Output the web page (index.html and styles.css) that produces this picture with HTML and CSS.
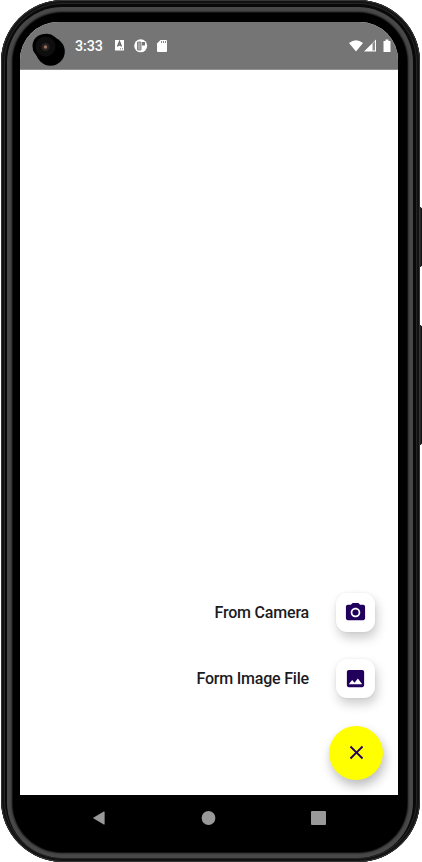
FILE: index.html
```html
<!DOCTYPE html>
<html lang="en">
<head>
<meta charset="utf-8">
<title>Phone</title>
<link rel="stylesheet" href="styles.css">
</head>
<body>
<div class="device">
  <i class="side-button power"></i>
  <i class="side-button volume"></i>
  <div class="frame"><div class="rim"><div class="bezel">
    <div class="screen">
      <header class="status">
        <svg class="lens" viewBox="0 0 34 36"><circle cx="18.500" cy="20.500" r="14.300"/><circle cx="12.500" cy="15" r="12"/><path d="M12 3Q18 1.500 23 6L31 14L6 27L1 19z"/><circle cx="13.500" cy="15.500" r="10" fill="#0e0e0e"/><circle cx="13.500" cy="16" r="4" fill="#2b2020"/><circle cx="13.500" cy="16" r="1.700" fill="#987565"/></svg>
        <span class="time">3:33</span>
        <svg class="notices" viewBox="0 0 54 14"><path fill="#fff" d="M0 1h9v10.500H0z"/><path d="M2.500 7.500l2-5 2 5M3 6h3" fill="none" stroke="#656565" stroke-width="1.300"/><path d="M5 9.800h3" stroke="#757575" stroke-dasharray="1"/><circle cx="25.700" cy="6.800" r="6.500" fill="#fff"/><path d="M22.500 3h3.500v8h-3.500z" fill="#a5a5a5" stroke="#858585"/><path d="M27 3h3v3.500h-3z" fill="#757575"/><path fill="#fff" d="M45.500 1H51q1 0 1 1v10q0 1-1 1h-8q-1 0-1-1V4.500z"/><path d="M46.500 2v2m2-2v2m2-2v2" stroke="#858585"/></svg>
        <svg class="signals" viewBox="0 0 43 14"><path fill="#fff" d="M0 4Q7-1.500 14 4L7 12.500zM27 .5V12.500H15z"/><path fill="#8d8d8d" d="M23.500 4.500L26 2v9.500h-2.500z"/><path fill="#fff" d="M36.500.5h3V2h2v11h-7V2h2z"/></svg>
      </header>
      <main>
        <div class="action"><span>From Camera</span><button><svg viewBox="0 0 24 24"><circle cx="12" cy="12" r="3.200"/><path d="M9 2 7.170 4H4c-1.100 0-2 .9-2 2v12c0 1.100.9 2 2 2h16c1.100 0 2-.9 2-2V6c0-1.100-.9-2-2-2h-3.170L15 2zm3 15c-2.760 0-5-2.240-5-5s2.240-5 5-5 5 2.240 5 5-2.240 5-5 5z"/></svg></button></div>
        <div class="action"><span>Form Image File</span><button><svg viewBox="0 0 24 24"><path d="M21 19V5c0-1.100-.9-2-2-2H5c-1.100 0-2 .9-2 2v14c0 1.100.9 2 2 2h14c1.100 0 2-.9 2-2zM8.500 13.500l2.500 3.010L14.500 12l4.500 6H5z"/></svg></button></div>
        <button class="fab"><svg viewBox="0 0 24 24"><path d="M19 6.410 17.590 5 12 10.590 6.410 5 5 6.410 10.590 12 5 17.590 6.410 19 12 13.410 17.590 19 19 17.590 13.410 12z"/></svg></button>
      </main>
    </div>
    <nav><svg viewBox="0 0 14 16"><path d="M.5 8 13 .5q1-.3 1 .7v13.600q0 1-1 .7z"/></svg><svg viewBox="0 0 14 14"><circle cx="7" cy="7" r="6.900"/></svg><svg viewBox="0 0 15 14"><rect width="15" height="14" rx="1"/></svg></nav>
  </div></div></div>
</div>
</body>
</html>
```
FILE: styles.css
```css
* { box-sizing: border-box; }
body { margin: 0; background: #fff; font-family: Roboto, sans-serif; }
.device { position: relative; width: 422px; height: 862px; padding: 0 2px 0 1px; overflow: hidden; }
.side-button { position: absolute; right: 0; width: 5px; background: #292929; border: 1px solid #111; border-radius: 2px; }
.power { top: 207px; height: 60px; }
.volume { top: 325px; height: 120px; }
.frame { position: relative; height: 862px; padding: 7px 7px 4px 6px; border-radius: 62px; background: #090909; box-shadow: inset 0 0 0 1px #343534, inset 0 0 0 3px #121212, inset 0 0 0 4px #252525; }
.rim { height: 100%; padding: 6px; border-radius: 55px; background: #000; box-shadow: inset 0 0 2px 5px #484848; }
.bezel { height: 100%; padding: 9px 9px 0 7px; border-radius: 49px; background: #000; }
.screen { height: 773px; display: flex; flex-direction: column; border-radius: 38px 38px 0 0; overflow: hidden; background: #fff; }
.status { flex: 0 0 48px; display: flex; align-items: center; padding-top: 1px; background: #757575; border-bottom: 1px solid #929292; }
.lens { width: 34px; height: 36px; margin: 5px 0 0 12px; }
.time { margin-left: 9px; color: #fff; font-size: 14.300px; line-height: 18px; font-weight: 500; width: 40px; letter-spacing: -.1px; }
.notices { width: 54px; height: 14px; }
.signals { width: 43px; height: 14px; margin: 0 6.500px 0 auto; }
main { flex: 1; display: flex; flex-direction: column; align-items: flex-end; justify-content: flex-end; padding: 0 15px 15.500px; }
.action { display: flex; align-items: center; gap: 27px; height: 39px; margin: 0 8px 27px 0; font-size: 16px; letter-spacing: -.2px; font-weight: 500; color: #1c1b1f; }
.action span { padding-top: 1px; }
.action + .action { margin-bottom: 28px; }
button { display: grid; place-items: center; width: 39px; height: 39px; padding: 0; border: 0; border-radius: 11px; background: #fff; box-shadow: 2px 6px 11px #0003, 0 0 3px #0001; }
button svg { width: 23px; height: 23px; fill: #21005d; }
.fab { width: 54px; height: 54px; border-radius: 50%; background: #ff0; box-shadow: 2px 6px 11px #0004; }
nav { height: 46px; display: flex; align-items: center; padding: 0 72px 0 71px; justify-content: space-between; }
nav svg { height: 14px; width: 15px; fill: #999; }
```
